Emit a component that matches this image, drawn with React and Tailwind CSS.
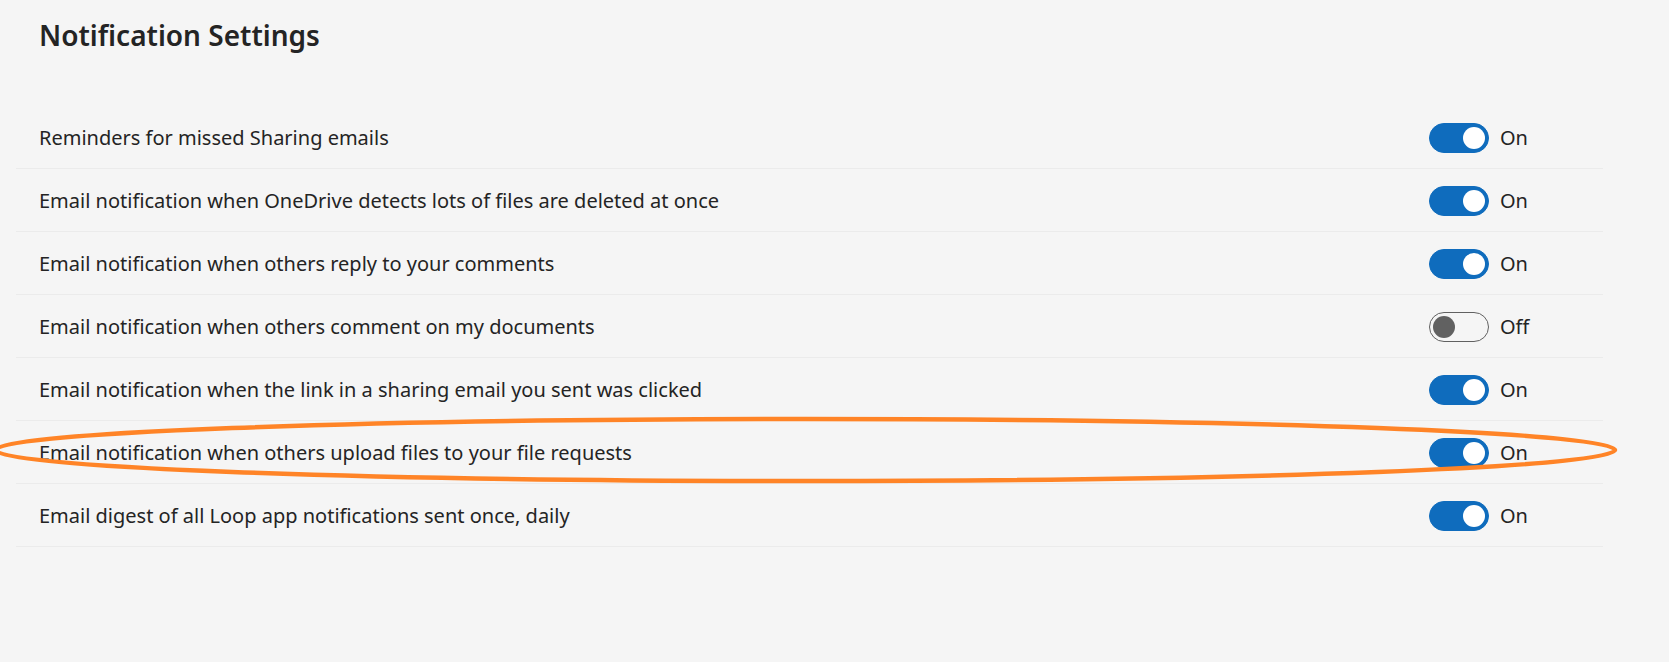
import React, { useState } from "react";

const SETTINGS = [
  { id: "missed", label: "Reminders for missed Sharing emails", on: true },
  { id: "deleted", label: "Email notification when OneDrive detects lots of files are deleted at once", on: true },
  { id: "reply", label: "Email notification when others reply to your comments", on: true },
  { id: "comment", label: "Email notification when others comment on my documents", on: false },
  { id: "clicked", label: "Email notification when the link in a sharing email you sent was clicked", on: true },
  { id: "upload", label: "Email notification when others upload files to your file requests", on: true },
  { id: "loop", label: "Email digest of all Loop app notifications sent once, daily", on: true },
];

export default function App() {
  const [values, setValues] = useState(() =>
    Object.fromEntries(SETTINGS.map((s) => [s.id, s.on]))
  );

  return (
    <div
      className="relative min-h-[662px] w-full overflow-hidden bg-[#f5f5f5] text-[#242424]"
      style={{ fontFamily: '"Noto Sans", "Open Sans", sans-serif' }}
    >
      <div className="pl-[16px] pr-[66px]">
        <h1 className="pl-[23px] pt-[16px] text-[28px] leading-[38px] font-semibold">
          Notification Settings
        </h1>
        <div className="mt-[52px]">
          {SETTINGS.map((s) => (
            <Row
              key={s.id}
              label={s.label}
              on={values[s.id]}
              onToggle={() => setValues((v) => ({ ...v, [s.id]: !v[s.id] }))}
            />
          ))}
        </div>
      </div>

      {/* annotation ellipse drawn over the list */}
      <svg
        className="pointer-events-none absolute left-0 top-0"
        width="1669"
        height="662"
        viewBox="0 0 1669 662"
        fill="none"
      >
        <ellipse cx="805" cy="450" rx="810" ry="31" stroke="#ff8427" strokeWidth="4.5" />
      </svg>
    </div>
  );
}

function Row({ label, on, onToggle }) {
  return (
    <div className="flex h-[63px] items-center justify-between border-b border-[#ebebeb] pt-[2px]">
      <span className="pl-[23px] text-[20px] leading-[26px]">{label}</span>
      <div className="flex w-[174px] items-center gap-[11px]">
        <button
          type="button"
          onClick={onToggle}
          className={[
            "flex h-[30px] w-[60px] items-center rounded-full border-[1.5px] px-[3px]",
            on ? "justify-end border-[#0f6cbd] bg-[#0f6cbd]" : "justify-start border-[#616161] bg-transparent",
          ].join(" ")}
        >
          <span className={["block h-[22px] w-[22px] rounded-full", on ? "bg-white" : "bg-[#616161]"].join(" ")} />
        </button>
        <span className="text-[20px] leading-[26px]">{on ? "On" : "Off"}</span>
      </div>
    </div>
  );
}
